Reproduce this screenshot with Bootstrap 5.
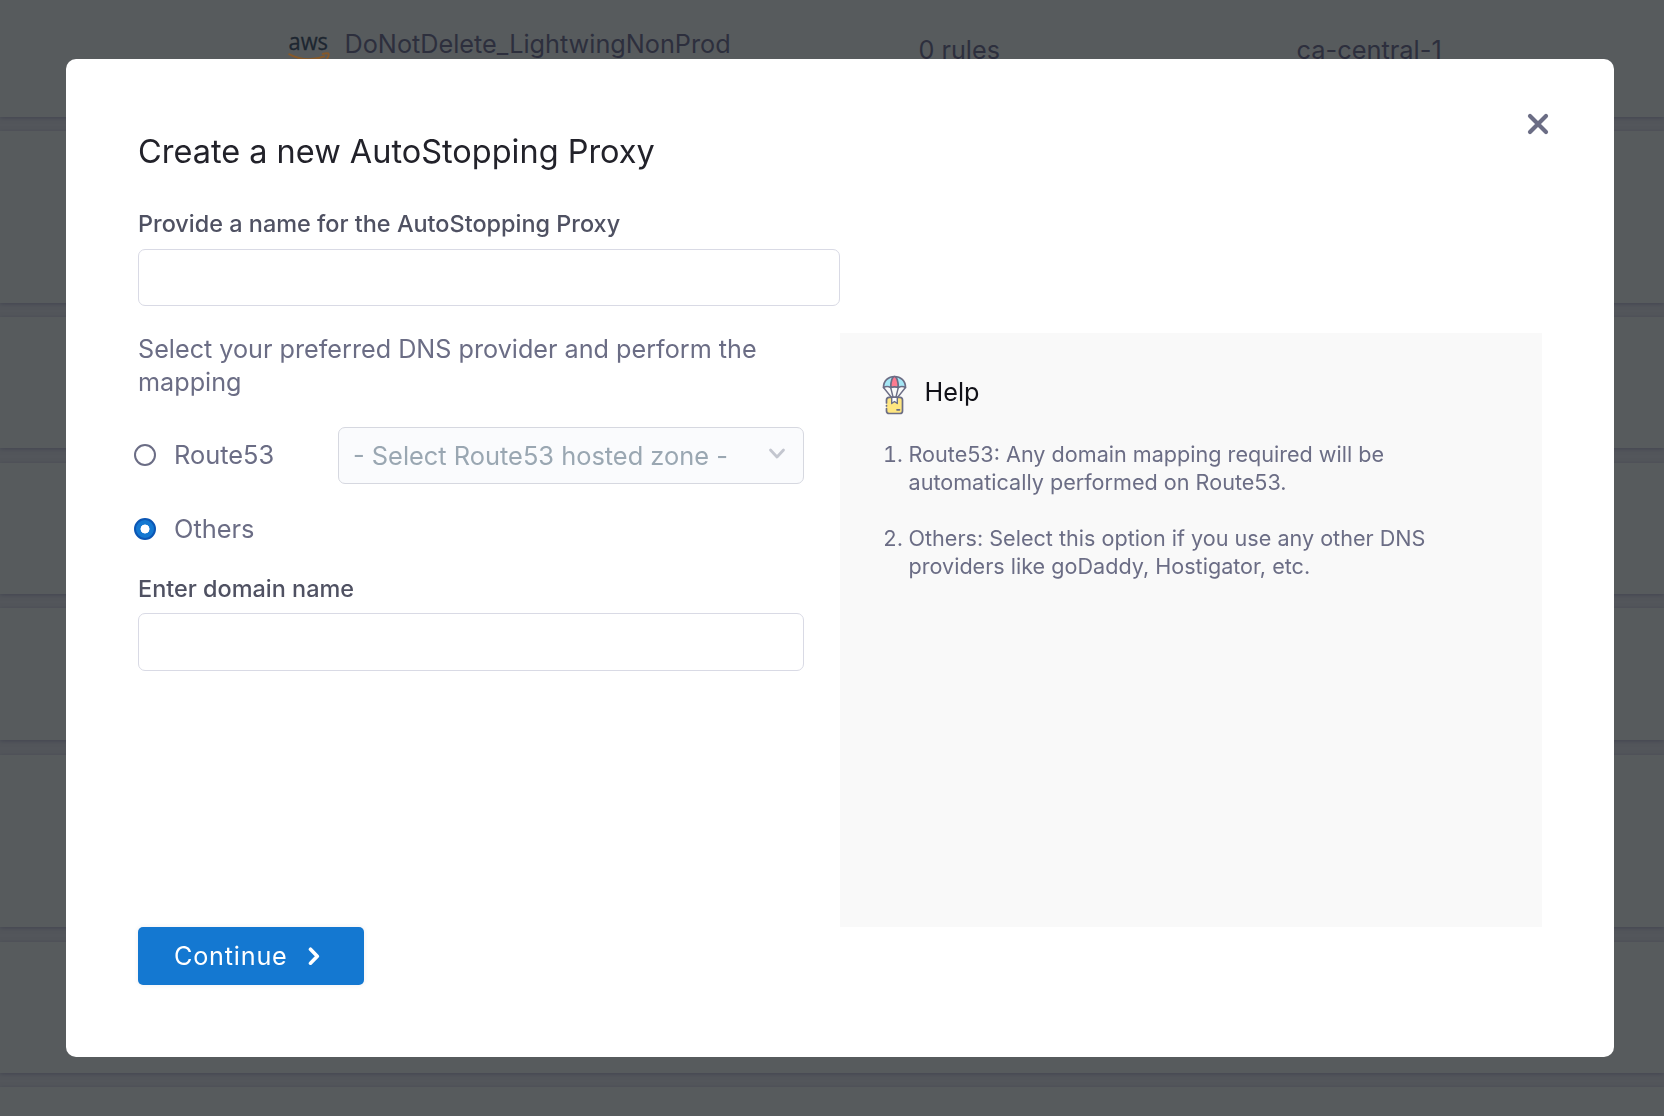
<!DOCTYPE html>
<html lang="en">
<head>
<meta charset="utf-8">
<meta name="viewport" content="width=device-width, initial-scale=1">
<title>Create a new AutoStopping Proxy</title>
<link href="https://cdn.jsdelivr.net/npm/bootstrap@5.3.0/dist/css/bootstrap.min.css" rel="stylesheet">
<style>
  body { font-family: Inter, "Liberation Sans", sans-serif; font-size: 25.2px; line-height: 33px; color: #6b6d85; background: #53565b; height: 1116px; }
  .proxy-list { height: 1116px; gap: 14.5px; }
  .proxy-row { background: #575b5d; box-shadow: 0 1px 4px rgba(62, 64, 78, .75); color: #2d2f3d; flex: none; }
  .r-1 { height: 116.5px; padding: 27px 0 0 288px; }
  .r-2 { height: 171.5px; }
  .r-3 { height: 131px; }
  .r-4 { height: 131px; }
  .r-5 { height: 132px; }
  .r-6 { height: 172.5px; }
  .r-7 { height: 131px; }
  .r-8 { height: 40px; }
  .aws-logo { width: 42px; height: 28px; margin: 7px 14.5px 0 0; overflow: visible; }
  .cell-name { width: 574px; margin-top: 1px; font-size: 25.25px; }
  .cell-rules { width: 378px; margin-top: 7px; }
  .cell-region { margin-top: 6px; font-size: 25.4px; }

  .modal-dialog { margin: 59px 0 0 66px; width: 1548px; max-width: none; }
  .modal-content { height: 998px; border: 0; border-radius: 10px; padding: 73px 72px 72px; color: inherit; }
  .close-btn { position: absolute; top: 53px; right: 64px; width: 24px; height: 24px; line-height: 0; }
  .dialog-title { font-size: 32.47px; line-height: 40px; font-weight: 400; color: #22222a; margin: 0 0 38px; }
  .form-label { font-size: 23.45px; line-height: 28px; font-weight: 500; color: #4f5162; margin-bottom: 11px; }
  .form-control { height: 57px; border: 1px solid #d9dae5; border-radius: 7px; background-color: #fff; }
  .name-input { width: 702px; }
  .dns-row { margin-top: 27px; }
  .left-pane { width: 702px; padding-right: 36px; flex: none; }
  .dns-text { margin: 0 0 28px; }
  .form-check-input[type=radio] { width: 22px; height: 22px; margin: 0 18px 0 -4px; border: 2px solid #6b6d85; background: #fff; box-shadow: none; flex: none; float: none; }
  .form-check-input[type=radio]:checked { border: 2px solid #0b56b4; background: radial-gradient(circle, #fff 0 4.2px, #1478d1 4.8px); }
  .route-row { height: 57px; }
  .route-row .form-check-input { margin-top: -1px; }
  .opt-label { font-size: 25.4px; margin-bottom: 2px; }
  .opt-wide { width: 164px; }
  .zone-select { flex: 1; font-size: 25.4px; line-height: 33px; background: #fafbfd; color: #9aa7b2; padding: 0 16.500px 0 14px; border-color: #d6d8e0; }
  .zone-arrow { margin-top: -3px; }
  .others-row { height: 34px; margin-top: 28px; margin-bottom: 28.5px; }
  .others-row .form-check-input { margin-top: -1px; }
  .domain-input { height: 58px; }
  .domain-label { margin-bottom: 10px; }
  .help-pane { background: #f9f9f9; width: 702px; height: 594px; padding: 40px 42px; }
  .help-head { color: #111118; height: 42px; margin-bottom: 25px; }
  .help-head span { margin-top: -3px; }
  .help-icon { width: 26px; height: 42px; margin-right: 16.5px; }
  .help-list { font-size: 21.6px; line-height: 28px; padding-left: 26.500px; margin: 0; }
  .help-list li { margin-bottom: 28px; }
  .btn-primary { --bs-btn-bg: #1478d1; --bs-btn-border-color: #1478d1; width: 226px; height: 58px; border: 0; border-radius: 5px; padding: 1px 0 0 36px; font-size: 25.2px; letter-spacing: .8px; box-shadow: 0 0 5px rgba(40, 41, 61, .08); }
  .next-arrow { margin: -1px 0 0 20.500px; }
</style>
<script src="https://cdn.jsdelivr.net/npm/bootstrap@5.3.0/dist/js/bootstrap.bundle.min.js"></script>
</head>
<body class="overflow-hidden">

<main class="proxy-list d-flex flex-column overflow-hidden">
  <div class="proxy-row r-1 d-flex align-items-start">
    <svg class="aws-logo" viewBox="0 0 42 28">
      <text x="0.500" y="16.300" font-family="Open Sans, sans-serif" font-weight="500" font-size="24" textLength="39.500" lengthAdjust="spacingAndGlyphs" fill="#1d2630" stroke="#1d2630" stroke-width=".3">aws</text>
      <path d="M0.500 19.800Q18 29.500 37 22.300" fill="none" stroke="#85592a" stroke-width="2"/>
      <path d="M34 20q6.500-1.500 6.800 0q0 2.500-2.300 5.500" fill="none" stroke="#85592a" stroke-width="1.800"/>
    </svg>
    <div class="cell-name">DoNotDelete_LightwingNonProd</div>
    <div class="cell-rules">0 rules</div>
    <div class="cell-region">ca-central-1</div>
  </div>
  <div class="proxy-row r-2"></div>
  <div class="proxy-row r-3"></div>
  <div class="proxy-row r-4"></div>
  <div class="proxy-row r-5"></div>
  <div class="proxy-row r-6"></div>
  <div class="proxy-row r-7"></div>
  <div class="proxy-row r-8"></div>
</main>

<div class="modal d-block overflow-hidden" tabindex="-1" role="dialog" aria-labelledby="dlgTitle">
  <div class="modal-dialog">
    <div class="modal-content">
      <button type="button" class="close-btn btn p-0 border-0" aria-label="Close">
        <svg width="24" height="24" viewBox="0 0 24 24" fill="none" stroke="#6b6d85" stroke-width="4.200" stroke-linecap="round"><path d="M4 4L20 20M20 4L4 20"/></svg>
      </button>
      <h1 class="dialog-title" id="dlgTitle">Create a new AutoStopping Proxy</h1>
      <div>
        <label class="form-label d-block" for="proxyName">Provide a name for the AutoStopping Proxy</label>
        <input class="form-control name-input" id="proxyName" type="text">
      </div>
      <div class="dns-row d-flex">
        <div class="left-pane">
          <p class="dns-text">Select your preferred DNS provider and perform the mapping</p>
          <div class="route-row d-flex align-items-center">
            <input class="form-check-input" type="radio" name="dns" id="r53">
            <label class="opt-label opt-wide" for="r53">Route53</label>
            <div class="form-control zone-select d-flex align-items-center justify-content-between">
              <span>- Select Route53 hosted zone -</span>
              <svg class="zone-arrow" width="20" height="14" viewBox="0 0 20 14" fill="none" stroke="#c3c6cf" stroke-width="2.800" stroke-linecap="round" stroke-linejoin="round"><path d="M3.500 3L10 10L16.500 3"/></svg>
            </div>
          </div>
          <div class="others-row d-flex align-items-center">
            <input class="form-check-input" type="radio" name="dns" id="others" checked>
            <label class="opt-label" for="others">Others</label>
          </div>
          <label class="form-label domain-label d-block" for="domain">Enter domain name</label>
          <input class="form-control domain-input" id="domain" type="text">
        </div>
        <aside class="help-pane">
          <div class="help-head d-flex align-items-center">
            <svg class="help-icon" viewBox="0 0 26 42" stroke="#6b6d85" stroke-width="1.700" stroke-linejoin="round" stroke-linecap="round">
              <path d="M1.500 14.500C1.500 7.500 6.500 3.500 12.500 3.500S23.500 7.500 23.500 14.500Q20 12.500 16.300 14.500Q12.500 13 8.700 14.500Q5 12.500 1.500 14.500Z" fill="#a5e6f5"/>
              <path d="M8.700 14.500C8.700 8 10.500 3.500 12.500 3.500S16.300 8 16.300 14.500Q12.500 13 8.700 14.500Z" fill="#ff7b90"/>
              <path d="M1.500 14.500L9.500 24.500M8.700 14.500L11 24M16.300 14.500L14 24M23.500 14.500L15.500 24.500" fill="none" stroke-width="1.400"/>
              <path d="M4.500 30V27Q4.500 24.300 7.200 24.300H18Q20.500 24.300 20.500 27V38Q20.500 40.500 18 40.500H7.200Q4.500 40.500 4.500 38V35.500" fill="#ffe680"/>
              <path d="M9.700 24.300H15.300V30.500L12.500 28.500L9.700 30.500Z" fill="#fff" stroke-width="1.400"/>
              <path d="M15 36.800H17.500M4.500 32.500V33" fill="none"/>
            </svg>
            <span>Help</span>
          </div>
          <ol class="help-list">
            <li>Route53: Any domain mapping required will be<br>automatically performed on Route53.</li>
            <li>Others: Select this option if you use any other DNS<br>providers like goDaddy, Hostigator, etc.</li>
          </ol>
        </aside>
      </div>
      <button type="button" class="btn btn-primary d-flex align-items-center">
        Continue
        <svg class="next-arrow" width="14" height="20" viewBox="0 0 14 20" fill="none" stroke="#fff" stroke-width="3.600" stroke-linecap="round" stroke-linejoin="round"><path d="M2.500 3.200L9.300 10.200L2.500 17.200"/></svg>
      </button>
    </div>
  </div>
</div>
</body>
</html>
